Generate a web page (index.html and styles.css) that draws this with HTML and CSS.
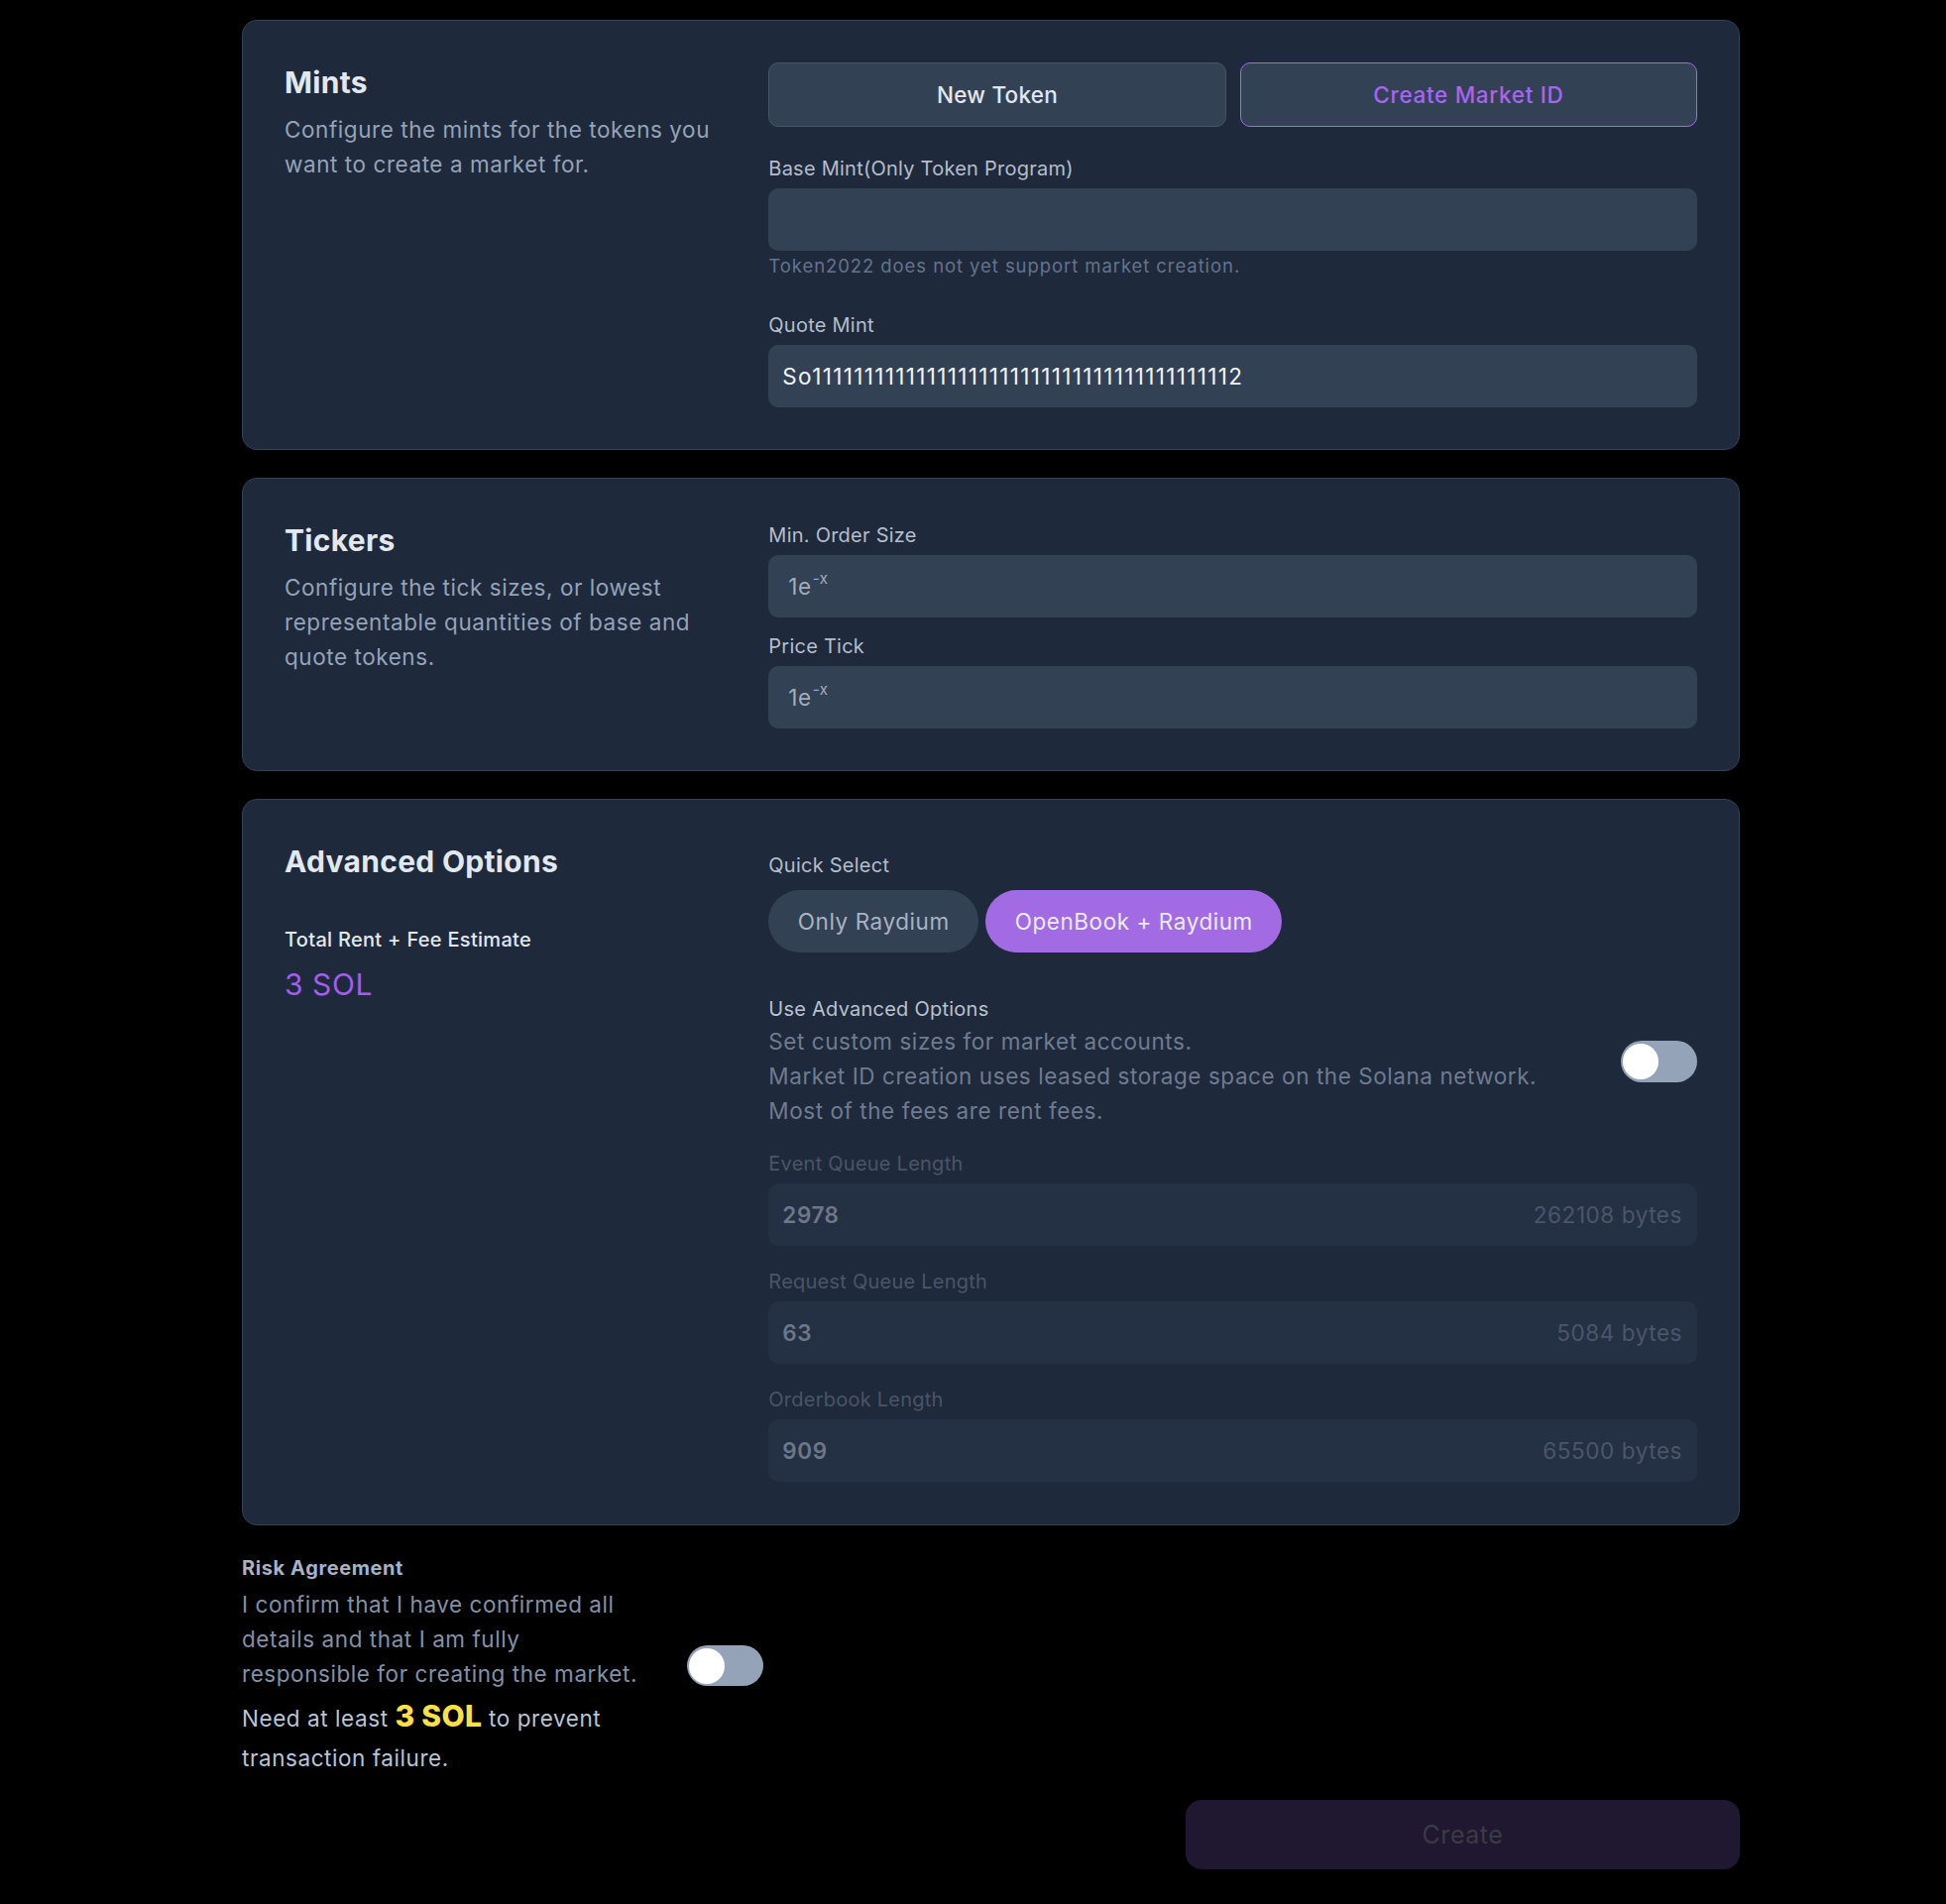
FILE: index.html
```html
<!DOCTYPE html>
<html lang="en">
<head>
<meta charset="utf-8">
<title>Create Market ID</title>
<link rel="stylesheet" href="styles.css">
</head>
<body>
<div class="page">
  <section class="card">
    <div class="side">
      <h2 class="title">Mints</h2>
      <p class="desc">Configure the mints for the tokens you want to create a market for.</p>
    </div>
    <div class="main">
      <div class="btn-row">
        <button class="btn">New Token</button>
        <button class="btn btn-outline">Create Market ID</button>
      </div>
      <div class="field">
        <label class="label">Base Mint(Only Token Program)</label>
        <div class="input"></div>
        <p class="helper">Token2022 does not yet support market creation.</p>
      </div>
      <div class="field field-quote">
        <label class="label">Quote Mint</label>
        <div class="input mint">So11111111111111111111111111111111111111112</div>
      </div>
    </div>
  </section>

  <section class="card">
    <div class="side">
      <h2 class="title">Tickers</h2>
      <p class="desc">Configure the tick sizes, or lowest representable quantities of base and quote tokens.</p>
    </div>
    <div class="main">
      <div class="field">
        <label class="label">Min. Order Size</label>
        <div class="input ph">1e<sup>-x</sup></div>
      </div>
      <div class="field field-tick">
        <label class="label">Price Tick</label>
        <div class="input ph">1e<sup>-x</sup></div>
      </div>
    </div>
  </section>

  <section class="card card-adv">
    <div class="side">
      <h2 class="title">Advanced Options</h2>
      <div class="sub-label">Total Rent + Fee Estimate</div>
      <div class="sol">3 SOL</div>
    </div>
    <div class="main">
      <div class="qs">
        <label class="label label-qs">Quick Select</label>
        <div class="pills">
          <button class="pill">Only Raydium</button>
          <button class="pill pill-active">OpenBook + Raydium</button>
        </div>
      </div>
      <div class="adv-row">
        <div class="adv-text">
          <div class="label label-adv">Use Advanced Options</div>
          <p class="adv-desc">Set custom sizes for market accounts.<br>Market ID creation uses leased storage space on the Solana network.<br>Most of the fees are rent fees.</p>
        </div>
        <div class="toggle"><span class="knob"></span></div>
      </div>
      <div class="dfield">
        <label class="label dlabel">Event Queue Length</label>
        <div class="dinput"><span class="dval">2978</span><span class="bytes">262108 bytes</span></div>
      </div>
      <div class="dfield">
        <label class="label dlabel">Request Queue Length</label>
        <div class="dinput"><span class="dval">63</span><span class="bytes">5084 bytes</span></div>
      </div>
      <div class="dfield">
        <label class="label dlabel">Orderbook Length</label>
        <div class="dinput"><span class="dval">909</span><span class="bytes">65500 bytes</span></div>
      </div>
    </div>
  </section>

  <div class="risk">
    <div class="risk-text">
      <div class="risk-title">Risk Agreement</div>
      <p class="risk-desc">I confirm that I have confirmed all<br>details and that I am fully<br>responsible for creating the market.</p>
      <p class="risk-need">Need at least <span class="need-sol">3 SOL</span> to prevent<br>transaction failure.</p>
    </div>
    <div class="toggle toggle-risk"><span class="knob"></span></div>
  </div>

  <div class="actions">
    <button class="create">Create</button>
  </div>
</div>
</body>
</html>
```

FILE: styles.css
```css
* { box-sizing: border-box; }

body {
  margin: 0;
  background: #000;
  font-family: Inter, "Noto Sans", sans-serif;
  color: #e2e8f0;
  letter-spacing: 0.035em;
}

.page {
  padding: 20px 0 34px 244px;
  width: 1755px;
}

button {
  font-family: inherit;
  letter-spacing: inherit;
  border: none;
  cursor: pointer;
}

.card {
  width: 1511px;
  background: #1e293b;
  border: 1px solid #334155;
  border-radius: 15px;
  padding: 42px;
  display: grid;
  grid-template-columns: repeat(3, minmax(0, 1fr));
  column-gap: 40px;
}

.card + .card { margin-top: 28px; }

.card-adv { padding-bottom: 43px; }

.main { grid-column: span 2; }

.title {
  margin: 0;
  font-size: 30px;
  line-height: 40px;
  font-weight: 700;
  color: #e2e8f0;
  letter-spacing: 0.01em;
}

.desc {
  margin: 10px 0 0;
  font-size: 22.5px;
  line-height: 35px;
  color: #94a3b8;
}

.btn-row {
  display: grid;
  grid-template-columns: 1fr 1fr;
  gap: 14px;
  margin-bottom: 27px;
}

.btn {
  height: 65px;
  border-radius: 10px;
  background: #334155;
  border: 1px solid #475569;
  font-size: 22.5px;
  font-weight: 500;
  color: #e2e8f0;
  letter-spacing: 0.01em;
}

.btn-outline {
  border-color: #a864f2;
  color: #a864f2;
  letter-spacing: 0.03em;
}

.label {
  display: block;
  font-size: 20px;
  line-height: 30px;
  color: #b4becb;
  margin-bottom: 5px;
  letter-spacing: 0.012em;
}

.input {
  height: 63px;
  border-radius: 10px;
  background: #334155;
  padding: 0 14px;
  display: flex;
  align-items: center;
  font-size: 22.5px;
  color: #f1f5f9;
}

.input.mint { letter-spacing: 1.35px; }

.input.ph {
  padding-left: 20px;
  color: #a3adbb;
}

.input sup {
  font-size: 15px;
  align-self: flex-start;
  margin-top: 14px;
  margin-left: 1px;
}

.helper {
  margin: 3px 0 0;
  font-size: 18.5px;
  line-height: 25px;
  color: #64748b;
  letter-spacing: 0.05em;
}

.field-quote { margin-top: 32px; }
.field-tick { margin-top: 14px; }

.sub-label {
  margin-top: 44px;
  font-size: 20px;
  line-height: 30px;
  font-weight: 500;
  color: #e2e8f0;
  letter-spacing: 0.015em;
}

.sol {
  margin-top: 10px;
  font-size: 30px;
  line-height: 40px;
  color: #a35cf2;
}

.qs { margin-top: 9px; }
.label-qs { margin-bottom: 10px; }

.pills {
  display: flex;
  gap: 7px;
}

.pill {
  height: 63px;
  padding: 0 29.5px;
  border-radius: 999px;
  background: #334155;
  color: #a8b3c3;
  font-size: 22.5px;
}

.pill-active {
  background: #a36be3;
  color: #e8ecf4;
}

.adv-row {
  margin-top: 42px;
  display: flex;
  align-items: center;
  justify-content: space-between;
}

.label-adv {
  margin-bottom: 0;
  color: #b8c2cf;
}

.adv-desc {
  margin: 0;
  font-size: 22.5px;
  line-height: 35px;
  color: #6f7c90;
}

.toggle {
  position: relative;
  flex: none;
  width: 77px;
  height: 42px;
  border-radius: 21px;
  background: #94a3b8;
}

.knob {
  position: absolute;
  left: 2px;
  top: 3px;
  width: 36px;
  height: 36px;
  border-radius: 50%;
  background: #fff;
}

.dfield { margin-top: 21px; }

.dlabel { color: #4a5567; }

.dinput {
  height: 63px;
  border-radius: 10px;
  background: #243043;
  padding: 0 15px 0 14px;
  display: flex;
  align-items: center;
  justify-content: space-between;
  font-size: 22.5px;
}

.dval {
  font-weight: 600;
  color: #6c778a;
}

.bytes { color: #4b5669; }

.risk {
  margin-top: 28px;
  display: flex;
  align-items: center;
  gap: 43px;
}

.risk-text { width: 406px; }

.risk-title {
  font-size: 20px;
  line-height: 30px;
  font-weight: 700;
  color: #a7b2c2;
  letter-spacing: 0.03em;
}

.risk-desc {
  margin: 4px 0 0;
  font-size: 22.5px;
  line-height: 35px;
  color: #8391a6;
}

.risk-need {
  margin: 5px 0 0;
  font-size: 22.5px;
  line-height: 40px;
  color: #bac4d3;
}

.need-sol {
  font-size: 30px;
  font-weight: 800;
  color: #fde047;
  letter-spacing: 0.01em;
}

.toggle-risk { height: 41px; }
.toggle-risk .knob { top: 2.5px; }

.actions {
  margin-top: 22px;
  display: flex;
  justify-content: flex-end;
}

.create {
  width: 559px;
  height: 70px;
  border-radius: 16px;
  background: #1f1830;
  color: #3c3b43;
  font-size: 25px;
}
```
